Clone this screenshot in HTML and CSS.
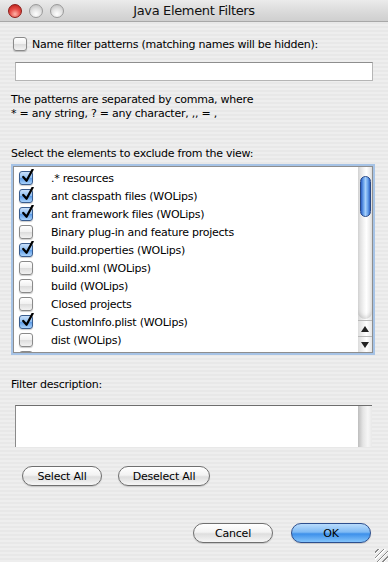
FILE: index.html
```html
<!DOCTYPE html>
<html lang="en">
<head>
    <meta charset="UTF-8">
    <title>Java Element Filters</title>
    <link rel="stylesheet" href="styles.css">
</head>
<body>
    <div class="window">
        <div class="titlebar">
            <div class="lights">
                <span class="light close"></span>
                <span class="light"></span>
                <span class="light"></span>
            </div>
            <div class="title">Java Element Filters</div>
        </div>

        <div class="content">
            <div class="check-row">
                <span class="checkbox"></span>
                <span>Name filter patterns (matching names will be hidden):</span>
            </div>

            <div class="textfield"></div>

            <p class="hint">The patterns are separated by comma, where<br>* = any string, ? = any character, ,, = ,</p>

            <p class="label">Select the elements to exclude from the view:</p>

            <div class="list">
                <div class="list-items">
                    <div class="item"><span class="checkbox on"><svg viewBox="0 0 16 16"><path d="M3.5 8.5 L7 12.5 L13.5 0.5"/></svg></span><span>.* resources</span></div>
                    <div class="item"><span class="checkbox on"><svg viewBox="0 0 16 16"><path d="M3.5 8.5 L7 12.5 L13.5 0.5"/></svg></span><span>ant classpath files (WOLips)</span></div>
                    <div class="item"><span class="checkbox on"><svg viewBox="0 0 16 16"><path d="M3.5 8.5 L7 12.5 L13.5 0.5"/></svg></span><span>ant framework files (WOLips)</span></div>
                    <div class="item"><span class="checkbox"></span><span>Binary plug-in and feature projects</span></div>
                    <div class="item"><span class="checkbox on"><svg viewBox="0 0 16 16"><path d="M3.5 8.5 L7 12.5 L13.5 0.5"/></svg></span><span>build.properties (WOLips)</span></div>
                    <div class="item"><span class="checkbox"></span><span>build.xml (WOLips)</span></div>
                    <div class="item"><span class="checkbox"></span><span>build (WOLips)</span></div>
                    <div class="item"><span class="checkbox"></span><span>Closed projects</span></div>
                    <div class="item"><span class="checkbox on"><svg viewBox="0 0 16 16"><path d="M3.5 8.5 L7 12.5 L13.5 0.5"/></svg></span><span>CustomInfo.plist (WOLips)</span></div>
                    <div class="item"><span class="checkbox"></span><span>dist (WOLips)</span></div>
                    <div class="item"><span class="checkbox"></span></div>
                </div>
                <div class="scrollbar">
                    <div class="track">
                        <div class="thumb"></div>
                    </div>
                    <div class="arrow up"></div>
                    <div class="arrow down"></div>
                </div>
            </div>

            <p class="label desc-label">Filter description:</p>

            <div class="description">
                <div class="desc-body"></div>
                <div class="desc-track"></div>
            </div>

            <div class="select-buttons">
                <button class="aqua-btn select-btn">Select All</button>
                <button class="aqua-btn deselect-btn">Deselect All</button>
            </div>

            <div class="dialog-buttons">
                <button class="aqua-btn">Cancel</button>
                <button class="aqua-btn default">OK</button>
            </div>
        </div>

        <div class="grip"></div>
    </div>
</body>
</html>
```

FILE: styles.css
```css
html, body {
    margin: 0;
    padding: 0;
}
body {
    font-family: 'DejaVu Sans', 'Liberation Sans', sans-serif;
    font-size: 11px;
    letter-spacing: -0.25px;
    color: #000;
    width: 388px;
    height: 562px;
    overflow: hidden;
}
.window {
    position: relative;
    width: 388px;
    height: 562px;
    background: repeating-linear-gradient(#eeeeee 0 2px, #e8e8e8 2px 4px);
}
.titlebar {
    height: 22px;
    position: relative;
    background: linear-gradient(#ebebeb, #d9d9d9 60%, #cfcfcf);
    border-bottom: 1px solid #a8a8a8;
    box-sizing: border-box;
    display: flex;
    align-items: center;
    justify-content: center;
}
.lights {
    position: absolute;
    left: 8px;
    top: 4px;
    display: flex;
    gap: 7px;
}
.light {
    width: 14px;
    height: 14px;
    border-radius: 50%;
    box-sizing: border-box;
    border: 1px solid #9a9a9a;
    background: radial-gradient(circle at 50% 75%, #ffffff 0, #e4e4e4 45%, #b9b9b9 100%);
}
.light.close {
    border-color: #8c1b17;
    background: radial-gradient(circle at 50% 75%, #ffb4a8 0, #e8504a 45%, #b3160f 100%);
}
.title {
    font-size: 13px;
    color: #111;
    letter-spacing: -0.35px;
}
.content {
    padding: 14px 13px 0 13px;
    display: flex;
    flex-direction: column;
}
.check-row {
    display: flex;
    align-items: center;
    gap: 5px;
    height: 16px;
}
.checkbox {
    width: 14px;
    height: 14px;
    box-sizing: border-box;
    border: 1px solid #8a8a8a;
    border-radius: 3px;
    background: linear-gradient(#ffffff, #f0f0f0 50%, #dcdcdc 51%, #f2f2f2);
    box-shadow: 0 1px 1px rgba(0, 0, 0, 0.2);
    position: relative;
    flex: none;
}
.checkbox.on {
    border-color: #3a5d8e;
    background: linear-gradient(#c9e0fa, #8cbcf0 50%, #5a9ae6 51%, #a9d2fb);
}
.checkbox svg {
    position: absolute;
    left: 0;
    top: -3px;
    width: 15px;
    height: 15px;
    fill: none;
    stroke: #000;
    stroke-width: 2.4;
    stroke-linecap: round;
    stroke-linejoin: round;
}
.textfield {
    margin: 10px 2px 0 2px;
    height: 19px;
    background: #fff;
    border: 1px solid #b5b5b5;
    border-top-color: #8e8e8e;
    box-sizing: border-box;
}
.hint {
    margin: 12px 0 0 -2px;
    line-height: 14px;
}
.label {
    margin: 26px 0 0 -2px;
    line-height: 14px;
}
.list {
    margin-top: 5px;
    height: 187px;
    display: flex;
    background: #fff;
    border: 1px solid #8e8e8e;
    box-sizing: border-box;
    box-shadow: 0 0 0 2px #a6c3e6;
    width: 360px;
    overflow: hidden;
}
.list-items {
    flex: 1;
    padding-top: 2px;
    overflow: hidden;
}
.item {
    height: 18px;
    display: flex;
    align-items: center;
    padding-left: 5px;
}
.item .checkbox {
    margin-right: 18px;
}
.scrollbar {
    width: 14px;
    display: flex;
    flex-direction: column;
    background: linear-gradient(to right, #d6d6d6, #f3f3f3 40%, #ffffff 60%, #e2e2e2);
}
.track {
    flex: 1;
    padding: 9px 1px 0 2px;
    border-bottom-left-radius: 7px;
    border-bottom-right-radius: 7px;
    box-shadow: inset 0 -4px 4px -2px rgba(0, 0, 0, 0.15);
    margin-bottom: 1px;
}
.thumb {
    height: 41px;
    border: 1px solid #27498a;
    border-radius: 6px;
    box-sizing: border-box;
    background: linear-gradient(to right, #2c5fc4, #6fa8ee 30%, #a7cffa 50%, #6aa4ec 75%, #2e62c2);
}
.arrow {
    height: 15px;
    border-top: 1px solid #b8b8b8;
    position: relative;
    background: linear-gradient(to right, #dcdcdc, #f6f6f6 45%, #ffffff 60%, #e6e6e6);
}
.arrow::after {
    content: "";
    position: absolute;
    left: 3px;
    top: 5px;
    border-left: 4px solid transparent;
    border-right: 4px solid transparent;
}
.arrow.up::after {
    border-bottom: 6px solid #222;
}
.arrow.down::after {
    border-top: 6px solid #222;
}
.desc-label {
    margin-top: 25px;
}
.description {
    margin: 13px 2px 0 2px;
    height: 42px;
    width: 357px;
    display: flex;
    background: #fff;
    border-top: 1px solid #6e6e6e;
    border-left: 1px solid #8a8a8a;
    box-sizing: border-box;
}
.desc-body {
    flex: 1;
}
.desc-track {
    width: 14px;
    background: linear-gradient(to right, #bdbdbd, #e4e4e4 35%, #f6f6f6 70%, #e8e8e8);
}
.select-buttons {
    display: flex;
    gap: 16px;
    margin: 19px 0 0 9px;
}
.aqua-btn {
    font-family: 'DejaVu Sans', 'Liberation Sans', sans-serif;
    font-size: 11px;
    letter-spacing: -0.2px;
    height: 20px;
    width: 80px;
    padding: 0;
    border: 1px solid #6f6f6f;
    border-radius: 10px;
    color: #000;
    background: linear-gradient(#ffffff, #f3f3f3 45%, #dedede 55%, #f6f6f6);
    box-shadow: 0 1px 1px rgba(0, 0, 0, 0.15);
}
.deselect-btn {
    width: 92px;
}
.aqua-btn.default {
    border-color: #2d4f8e;
    background: linear-gradient(#b9dcfc, #7fbaf4 45%, #3d90ea 55%, #84c4fb);
}
.dialog-buttons {
    display: flex;
    justify-content: flex-end;
    gap: 18px;
    margin: 37px 4px 0 0;
}
.grip {
    position: absolute;
    right: 0;
    bottom: 0;
    width: 13px;
    height: 13px;
    background: repeating-linear-gradient(135deg, transparent 0 2px, #8a8a8a 2px 3px, #ffffff 3px 4px);
}
```
